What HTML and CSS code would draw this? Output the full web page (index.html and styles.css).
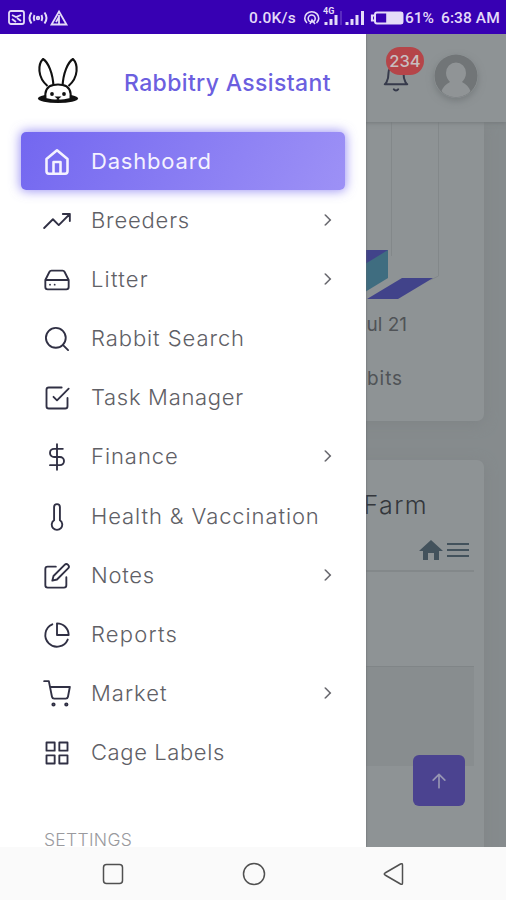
FILE: index.html
```html
<!DOCTYPE html>
<html lang="en">
<head>
<meta charset="utf-8">
<title>Rabbitry Assistant</title>
<link rel="stylesheet" href="styles.css">
</head>
<body>
<header class="status">
  <svg class="status-left" width="62" height="18" viewBox="0 0 62 18" fill="none" stroke="currentColor" stroke-width="1.8">
    <rect x="1" y="2" width="15" height="13" rx="2"/><path d="M4 6l4 2 5-2M4 10l4 3M9 9l4 3"/>
    <circle cx="30" cy="9" r="1.3"/><path stroke-width="2" d="M26.500 6q-1.500 3 0 6M33.500 6q1.500 3 0 6M23.500 3.500q-4 5.500 0 11M36.500 3.500q4 5.500 0 11"/>
    <path d="M51 2.500l7.500 13h-15zM51 6v9M48 13l3-5"/>
  </svg>
  <span class="speed">0.0K/s</span>
  <svg class="status-right" width="102" height="26" viewBox="303 4 102 26" fill="none" stroke="currentColor" stroke-width="1.6">
    <path d="M307 22a7 6.500 0 1 1 9.500 0"/><circle cx="311.700" cy="17.500" r="3.500"/><path d="M310 23l2-4 3 4"/>
    <text x="323" y="13" class="tiny">4G</text>
    <path stroke-width="3" d="M326 24v-3M331 24v-6M336 24v-10"/><path opacity=".25" d="M341 24V10"/>
    <path stroke-width="3" d="M347 24v-3M352 24v-6M357 24v-10M362.500 24V10"/>
    <path stroke-width="2.200" d="M374 14.500h-2v5h2"/><rect stroke-width="2" x="375" y="11.500" width="27.500" height="11" rx="2"/><path fill="currentColor" d="M387 12h15v10h-15z"/>
  </svg>
  <span class="battery">61%</span><span class="clock">6:38 AM</span>
</header>

<main class="app">
  <section class="page">
    <div class="topbar">
      <div class="bell">
        <svg width="30" height="30" viewBox="0 0 24 24" class="line"><path d="M18 8A6 6 0 0 0 6 8c0 7-3 9-3 9h18s-3-2-3-9M13.730 21a2 2 0 0 1-3.460 0"/></svg>
        <span class="badge">234</span>
      </div>
      <svg class="avatar" width="44" height="44" viewBox="0 0 44 44"><circle cx="22" cy="22" r="21.500" fill="#717577"/><path d="M12 19a10 10.500 0 1 1 20 0c0 4-2 7-4 9 4 2 7 5 8.500 9-7 8-22 8-29 0 1.500-4 4.500-7 8.500-9-2-2-4-5-4-9z" fill="#909496"/></svg>
    </div>
    <div class="card chart">
      <svg width="120" height="178" viewBox="365 122 120 178">
        <path d="M391.500 122v134M438.500 122v154l-8 4" fill="none" stroke="#83888a"/>
        <path fill="#3f6d80" d="M365 250h23v28l-23 14z"/><path fill="#41438a" d="M365 250h23l-23 14z"/>
        <path fill="#41438a" d="M402 278h31l-35 21h-31z"/>
      </svg>
      <span class="axis">Jul 21</span>
      <span class="legend">Rabbits</span>
    </div>
    <div class="card farm">
      <h2>Farm</h2>
      <div class="tools">
        <svg width="24" height="22" viewBox="0 0 24 22"><path fill="#43525c" d="M12 1l12 11h-4v9h-5v-7H9v7H4v-9H0z"/></svg>
        <svg width="22" height="18" viewBox="0 0 22 18"><path stroke="#43525c" stroke-width="2.200" d="M0 3h22M0 9h22M0 15h22"/></svg>
      </div>
      <div class="row"></div>
      <div class="row shaded"></div>
    </div>
    <button class="totop" aria-label="Back to top"><svg width="20" height="20" viewBox="0 0 24 24" class="line"><path d="M12 20V4M5 11l7-7 7 7"/></svg></button>
  </section>

  <aside class="drawer">
    <div class="brand">
      <svg width="44" height="48" viewBox="0 0 44 48" fill="#fff" stroke="#111" stroke-width="2.100" stroke-linejoin="round">
        <ellipse cx="22" cy="41.500" rx="20" ry="4.500" fill="#111" stroke="none"/>
        <path d="M17.500 30C17 16 12 5 7 2 2 7 1 20 11.500 29M26.500 30C27 16 32 5 37 2c5 5 6 18-4.500 27"/>
        <path d="M9.500 42c-1-8 2-13 8-14q4.500-1 9 0c6 1 9 6 8 14q-12.500 3.500-25 0z"/>
        <g fill="#111" stroke="none"><circle cx="16" cy="37" r="1.900"/><circle cx="28" cy="37" r="1.900"/><path d="M18.500 39.500h7l-3.500 3z"/></g>
        <path fill="none" stroke-width="1.500" d="M22 41v2M18.500 45q3-4 7 0"/>
      </svg>
      <h1>Rabbitry Assistant</h1>
    </div>
    <nav class="menu">
      <a class="item active"><svg viewBox="0 0 24 24" class="line"><path d="M3 9.500L12 2l9 7.500V20a2 2 0 0 1-2 2H5a2 2 0 0 1-2-2zM9 22V12h6v10"/></svg><span class="l-dashboard">Dashboard</span></a>
      <a class="item more"><svg viewBox="0 0 24 24" class="line"><path d="M23 6l-9.500 9.500-5-5L1 18M17 6h6v6"/></svg><span class="l-breeders">Breeders</span></a>
      <a class="item more"><svg viewBox="0 0 24 24" class="line"><path d="M22 12H2M5.450 5.110L2 12v6a2 2 0 0 0 2 2h16a2 2 0 0 0 2-2v-6l-3.450-6.890A2 2 0 0 0 16.760 4H7.240a2 2 0 0 0-1.790 1.110zM6 16h.01M10 16h.01"/></svg><span class="l-litter">Litter</span></a>
      <a class="item"><svg viewBox="0 0 24 24" class="line"><circle cx="11" cy="11" r="8.500"/><path d="M21.500 21.500L17 17"/></svg><span class="l-search">Rabbit Search</span></a>
      <a class="item"><svg viewBox="0 0 24 24" class="line"><path d="M9 11l3 3L22 4M21 12v7a2 2 0 0 1-2 2H5a2 2 0 0 1-2-2V5a2 2 0 0 1 2-2h11"/></svg><span class="l-task">Task Manager</span></a>
      <a class="item more"><svg viewBox="0 0 24 24" class="line"><path d="M12 1v22M17 5H9.500a3.500 3.500 0 0 0 0 7h5a3.500 3.500 0 0 1 0 7H6"/></svg><span class="l-finance">Finance</span></a>
      <a class="item"><svg viewBox="0 0 24 24" class="line"><path d="M14.500 14.760V3.500a2.500 2.500 0 0 0-5 0v11.260a4.500 4.500 0 1 0 5 0z"/></svg><span class="l-health">Health &amp; Vaccination</span></a>
      <a class="item more"><svg viewBox="0 0 24 24" class="line"><path d="M11 4H4a2 2 0 0 0-2 2v14a2 2 0 0 0 2 2h14a2 2 0 0 0 2-2v-7M18.500 2.500a2.120 2.120 0 0 1 3 3L12 15l-4 1 1-4z"/></svg><span class="l-notes">Notes</span></a>
      <a class="item"><svg viewBox="0 0 24 24" class="line"><path d="M21.210 15.890A10 10 0 1 1 8 2.830M22 12A10 10 0 0 0 12 2v10z"/></svg><span class="l-reports">Reports</span></a>
      <a class="item more"><svg viewBox="0 0 24 24" class="line"><circle cx="9" cy="21" r="1"/><circle cx="20" cy="21" r="1"/><path d="M1 1h4l2.680 13.390a2 2 0 0 0 2 1.610h9.720a2 2 0 0 0 2-1.610L23 6H6"/></svg><span class="l-market">Market</span></a>
      <a class="item"><svg viewBox="0 0 24 24" class="line"><path d="M3 3h7v7H3zM14 3h7v7h-7zM14 14h7v7h-7zM3 14h7v7H3z"/></svg><span class="l-cage">Cage Labels</span></a>
    </nav>
    <div class="section">SETTINGS</div>
  </aside>
</main>

<footer class="sysnav">
  <svg width="24" height="24" viewBox="0 0 24 24"><rect x="2.500" y="2.500" width="19" height="19" rx="3"/></svg>
  <svg width="24" height="24" viewBox="0 0 24 24"><circle cx="12" cy="12" r="10.500"/></svg>
  <svg width="24" height="24" viewBox="0 0 24 24"><path d="M3 11q-1.500 1 0 2l15.500 9q2 1 2-1V3q0-2-2-1z"/></svg>
</footer>
</body>
</html>
```
FILE: styles.css
```css
* { box-sizing: border-box; }
body {
  margin: 0;
  width: 506px;
  height: 900px;
  display: flex;
  flex-direction: column;
  overflow: hidden;
  font-family: Inter, "Liberation Sans", sans-serif;
  font-weight: 300;
}
svg { display: block; flex: none; }
.line { fill: none; stroke: currentColor; stroke-width: 1.6; stroke-linecap: round; stroke-linejoin: round; }

.status {
  height: 34px;
  flex: none;
  display: flex;
  align-items: center;
  padding: 2px 6px 0 8px;
  background: #3700b3;
  color: #e4dbf8;
  font: 500 15.5px Roboto, sans-serif;
  white-space: nowrap;
}
.speed { margin-left: 179px; width: 54px; letter-spacing: .2px; }
.tiny { font: 700 9px Roboto, sans-serif; fill: currentColor; stroke: none; }
.battery { width: 36px; }
.clock { letter-spacing: .1px; }

.app { position: relative; flex: 1; min-height: 0; overflow: hidden; background: #868b8d; }
.page { height: 100%; padding-left: 344px; color: #505357; }
.topbar {
  height: 88px;
  display: flex;
  align-items: center;
  padding: 0 28px 4px 37px;
  justify-content: space-between;
  background: #8e9395;
  box-shadow: 0 1px 4px #74797b;
  position: relative;
}
.bell { position: relative; color: #363a4b; padding-top: 4px; }
.badge {
  position: absolute;
  left: 5px;
  top: -12px;
  width: 38px;
  height: 28px;
  border-radius: 14px;
  background: #b54549;
  color: #c8bfc0;
  font-size: 16.5px;
  font-weight: 500;
  line-height: 28px;
  text-align: center;
}
.avatar { border-radius: 50%; box-shadow: 0 3px 7px #777c7e; }
.card { width: 140px; background: #8e9395; box-shadow: 0 3px 14px #7f8486; }
.chart {
  height: 299px;
  border-radius: 0 0 7px 7px;
  padding-left: 21px;
  display: flex;
  flex-direction: column;
}
.axis, .legend { display: flex; justify-content: flex-end; white-space: nowrap; font-size: 19px; font-weight: 400; line-height: 24px; }
.axis { margin-top: 13px; width: 42px; }
.legend { margin-top: 30px; width: 38px; letter-spacing: .9px; }
.farm { height: 420px; margin-top: 39px; border-radius: 7px; padding: 28px 10px 0 20px; }
.farm h2 { margin: 0; width: 64px; font-size: 25px; font-weight: 300; line-height: 34px; letter-spacing: 1.4px; color: #34373c; display: flex; justify-content: flex-end; }
.tools { height: 50px; display: flex; align-items: center; justify-content: flex-end; gap: 4px; padding: 7px 5px 0 0; border-bottom: 2px solid #83888a; }
.row { height: 94px; }
.row.shaded { height: 100px; background: #888d8f; border-top: 1px solid #808587; }
.totop {
  position: absolute;
  right: 41px;
  bottom: 41px;
  width: 52px;
  height: 51px;
  border: 0;
  padding: 0;
  display: grid;
  place-items: center;
  border-radius: 6px;
  background: #4b4390;
  color: #9796b3;
}
.totop .line { stroke-width: 2; }

.drawer { position: absolute; left: 0; top: 0; bottom: 0; width: 366px; background: #fff; box-shadow: 0 0 2px #606466; overflow: hidden; }
.brand { display: flex; align-items: center; height: 98px; padding: 0 0 5px 36px; }
.brand h1 { margin: 4px 0 0 44px; font-size: 23px; font-weight: 500; line-height: 30px; letter-spacing: .36px; color: #6c5fdf; white-space: nowrap; }
.menu { display: flex; flex-direction: column; }
.item {
  height: 58px;
  margin: 0 21px 1.100px;
  padding: 0 13px 0 22px;
  display: flex;
  align-items: center;
  color: #303044;
}
.item svg { width: 28px; height: 28px; margin-top: 2px; }
.item span { margin-left: 20px; font-size: 22px; line-height: 30px; white-space: nowrap; color: #606066; }
.item .l-dashboard { letter-spacing: .8px; }
.item .l-breeders { letter-spacing: .8px; }
.item .l-litter { letter-spacing: 1.2px; }
.item .l-search { letter-spacing: .92px; }
.item .l-task { letter-spacing: .7px; }
.item .l-finance { letter-spacing: .95px; }
.item .l-health { letter-spacing: .9px; }
.item .l-notes { letter-spacing: .7px; }
.item .l-reports { letter-spacing: 1.2px; }
.item .l-market { letter-spacing: 1px; }
.item .l-cage { letter-spacing: .6px; }
.item.more::after {
  content: "";
  width: 7px;
  height: 7px;
  margin-left: auto;
  margin-right: 3px;
  border: solid #606066;
  border-width: 1.500px 1.500px 0 0;
  box-shadow: .5px -.5px 0 #808086;
  transform: rotate(45deg);
}
.active {
  color: #f4f2ff;
  border-radius: 5px;
  background: linear-gradient(118deg, #7367f0, #9d91f6);
  box-shadow: 0 0 11px 1px rgba(115, 103, 240, .7);
}
.item.active span { color: #f4f2ff; font-weight: 400; }
.active .line { stroke-width: 2.2; }
.section { padding: 50px 0 0 44px; font-size: 17.5px; line-height: 15px; letter-spacing: .3px; color: #9a9a9e; }

.sysnav { flex: none; height: 53px; display: flex; align-items: center; justify-content: space-between; padding: 0 100px 0 101px; background: #fafafa; }
.sysnav svg { fill: none; stroke: #505050; stroke-width: 1.500; }
```
